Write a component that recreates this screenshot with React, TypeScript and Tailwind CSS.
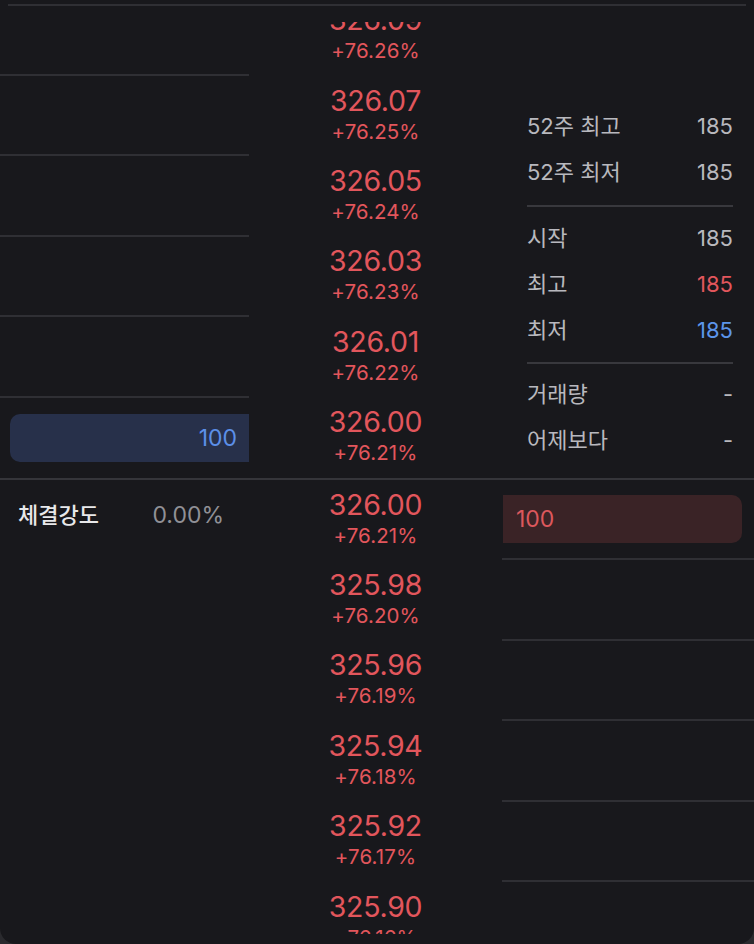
import React from "react";

const asks = [
  { price: "326.09", rate: "+76.26%", volume: "" },
  { price: "326.07", rate: "+76.25%", volume: "" },
  { price: "326.05", rate: "+76.24%", volume: "" },
  { price: "326.03", rate: "+76.23%", volume: "" },
  { price: "326.01", rate: "+76.22%", volume: "" },
  { price: "326.00", rate: "+76.21%", volume: "100" },
];

const bids = [
  { price: "326.00", rate: "+76.21%", volume: "100" },
  { price: "325.98", rate: "+76.20%", volume: "" },
  { price: "325.96", rate: "+76.19%", volume: "" },
  { price: "325.94", rate: "+76.18%", volume: "" },
  { price: "325.92", rate: "+76.17%", volume: "" },
  { price: "325.90", rate: "+76.16%", volume: "" },
];

const PriceCell = ({ price, rate }: { price: string; rate: string }) => (
  <div className="h-[80.4px] flex flex-col items-center justify-center text-[#e2565c]">
    <div className="text-[28.5px] leading-[30px] tracking-[-0.3px]">{price}</div>
    <div className="text-[20.5px] leading-[31px] tracking-[0.1px]">{rate}</div>
  </div>
);

const InfoRow = ({ label, value, color }: { label: string; value: string; color?: string }) => (
  <div className="h-[46px] flex items-center justify-between text-[22px]">
    <span className="text-[#b8b8be]">{label}</span>
    <span className={color ?? "text-[#b8b8be]"}>{value}</span>
  </div>
);

export default function App() {
  return (
    <div
      className="w-[754px] h-[944px] bg-[#2a2a2e]"
      style={{ fontFamily: 'Inter, "Noto Sans CJK KR", sans-serif' }}
    >
      <div className="h-full bg-[#18181c] rounded-b-[16px] flex flex-col overflow-hidden">
        <div className="mt-[4px] mx-[8px] h-[2px] bg-[#2f2f34]" />
        <div className="h-[16px]" />
        <div className="h-[912px] overflow-hidden">
          <div className="mt-[-26.4px]">
            {/* 매도 호가 */}
            <div className="flex">
              <div className="w-[249px] flex flex-col">
                {asks.map((a, i) =>
                  a.volume ? (
                    <div key={i} className="h-[80.4px] flex items-center pl-[10px]">
                      <div className="w-full h-[48px] rounded-l-[10px] bg-[#27304a] flex items-center justify-end pr-[12px] text-[23px] text-[#5c8fe8]">
                        {a.volume}
                      </div>
                    </div>
                  ) : (
                    <div key={i} className="h-[80.4px] border-b-2 border-[#2f2f34]" />
                  )
                )}
              </div>
              <div className="w-[253px] flex flex-col">
                {asks.map((a, i) => (
                  <PriceCell key={i} price={a.price} rate={a.rate} />
                ))}
              </div>
              <div className="flex-1 pl-[25px] pr-[21px] pt-[108px]">
                <InfoRow label="52주 최고" value="185" />
                <InfoRow label="52주 최저" value="185" />
                <div className="my-[9px] h-[2px] bg-[#38383d]" />
                <InfoRow label="시작" value="185" />
                <InfoRow label="최고" value="185" color="text-[#e2565c]" />
                <InfoRow label="최저" value="185" color="text-[#5c95ea]" />
                <div className="my-[8px] h-[2px] bg-[#38383d]" />
                <InfoRow label="거래량" value="-" />
                <InfoRow label="어제보다" value="-" />
              </div>
            </div>

            <div className="h-[2px] bg-[#35353a]" />

            {/* 매수 호가 */}
            <div className="flex">
              <div className="w-[249px] pl-[18px] pr-[25px] pt-[22px]">
                <div className="flex items-center justify-between leading-[26px]">
                  <span className="text-[22px] font-medium text-[#e8e8ea]">체결강도</span>
                  <span className="text-[23px] text-[#909096]">0.00%</span>
                </div>
              </div>
              <div className="w-[253px] flex flex-col">
                {bids.map((b, i) => (
                  <PriceCell key={i} price={b.price} rate={b.rate} />
                ))}
              </div>
              <div className="flex-1 flex flex-col">
                {bids.map((b, i) =>
                  b.volume ? (
                    <div key={i} className="h-[80.4px] flex items-center pl-[1px] pr-[12px] border-b-2 border-[#2f2f34]">
                      <div className="w-full h-[48px] rounded-r-[10px] bg-[#3a2326] flex items-center pl-[13px] text-[23px] text-[#dc585d]">
                        {b.volume}
                      </div>
                    </div>
                  ) : (
                    <div key={i} className="h-[80.4px] border-b-2 border-[#2f2f34]" />
                  )
                )}
              </div>
            </div>
          </div>
        </div>
      </div>
    </div>
  );
}
